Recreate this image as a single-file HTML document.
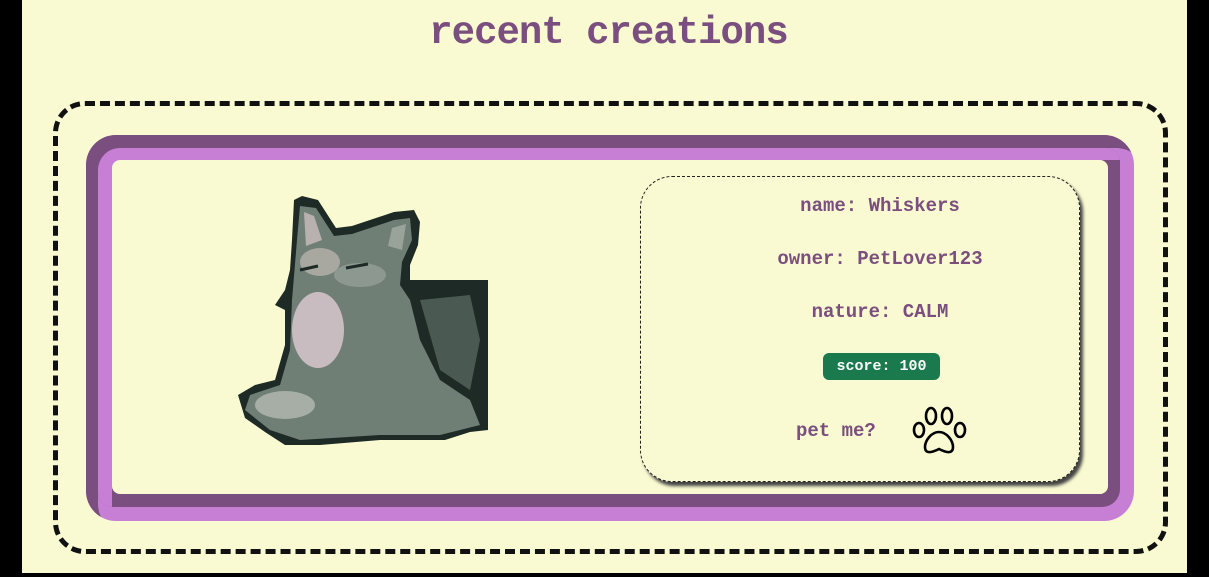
<!DOCTYPE html>
<html><head><meta charset="utf-8"><style>
html,body{margin:0;padding:0}
body{width:1209px;height:577px;background:#000;position:relative;overflow:hidden;font-family:"Liberation Mono",monospace}
.page{position:absolute;left:22px;top:0;width:1165px;height:573px;background:#fafad2}
.title{position:absolute;left:4px;width:1209px;text-align:center;top:11px;font-size:39px;font-weight:bold;color:#7a4e7e;letter-spacing:-1px}
.dash{position:absolute;left:53px;top:101px;width:1105px;height:443px;border:5px dashed #111;border-radius:32px}
.f1{position:absolute;left:86px;top:135px;width:1048px;height:386px;background:#c77fd6;border-radius:30px;box-shadow:inset 12px 13px 0 #7a4e7e}
.f2{position:absolute;left:98px;top:148px;width:1022px;height:359px;background:#7a4e7e;border-radius:22px 14px 18px 14px;box-shadow:inset 14px 12px 0 #c77fd6}
.f3{position:absolute;left:112px;top:160px;width:996px;height:334px;background:#fafad2;border-radius:8px}
.info{position:absolute;left:640px;top:176px;width:438px;height:304px;border:1px dashed #222;border-radius:32px;box-shadow:3px 4px 3px #444;background:#fafad2}
.t{position:absolute;left:20px;width:100%;text-align:center;font-size:19px;font-weight:bold;color:#7a4e7e;letter-spacing:0}
.score{position:absolute;left:182px;top:176px;width:117px;height:27px;background:#1a7a4e;border-radius:6px;color:#fff;font-size:15px;font-weight:bold;text-align:center;line-height:27px}
</style></head><body>
<div class="page"></div>
<div class="title">recent creations</div>
<div class="dash"></div>
<div class="f1"></div><div class="f2"></div><div class="f3"></div>
<svg style="position:absolute;left:0;top:0" width="1209" height="577">
<polygon fill="#1e2a25" points="294,200 302,196 318,200 336,228 352,226 394,212 414,210 420,222 418,245 410,265 410,280 488,280 488,430 470,432 445,440 380,440 320,445 285,445 265,432 245,418 238,395 255,385 275,380 285,345 285,310 275,305 285,290 290,270 292,240"/>
<polygon fill="#6f7f76" points="300,206 316,208 334,236 352,234 394,220 410,218 412,240 402,262 400,285 410,300 420,340 440,380 470,400 480,425 440,435 380,435 300,440 270,430 245,410 250,395 280,385 290,350 292,300 297,240"/>
<polygon fill="#4a5a52" points="420,300 470,295 480,340 470,390 440,370"/>
<polygon fill="#b9b0b0" points="304,212 314,216 322,240 306,246"/>
<polygon fill="#9aa39a" points="392,228 406,224 402,250 388,246"/>
<ellipse cx="318" cy="330" rx="26" ry="38" fill="#c9bcc0"/>
<ellipse cx="320" cy="262" rx="20" ry="14" fill="#a8a8a0"/>
<ellipse cx="285" cy="405" rx="30" ry="14" fill="#a7aea5"/>
<ellipse cx="360" cy="275" rx="26" ry="12" fill="#8d9990"/>
<path d="M300 270 l18 -4 M346 268 l22 -4" stroke="#1e2a25" stroke-width="3"/>
</svg>
<div class="info">
<div class="t" style="top:18px">name: Whiskers</div>
<div class="t" style="top:71px">owner: PetLover123</div>
<div class="t" style="top:124px">nature: CALM</div>
<div class="score">score: 100</div>
<div class="t" style="top:243px;left:155px;width:auto">pet me?</div>
<svg style="position:absolute;left:270px;top:228px" width="58" height="52" viewBox="0 0 58 52" fill="none" stroke="#000" stroke-width="2.6">
<ellipse cx="20" cy="11" rx="5" ry="8"/><ellipse cx="36" cy="11" rx="5" ry="8"/>
<ellipse cx="8" cy="25" rx="5" ry="7"/><ellipse cx="49" cy="25" rx="5" ry="7"/>
<path d="M28 27 C20 27 14 36 14 42 C14 50 22 47 28 44 C34 47 42 50 42 42 C42 36 36 27 28 27 Z"/>
</svg>
</div>
</body></html>
